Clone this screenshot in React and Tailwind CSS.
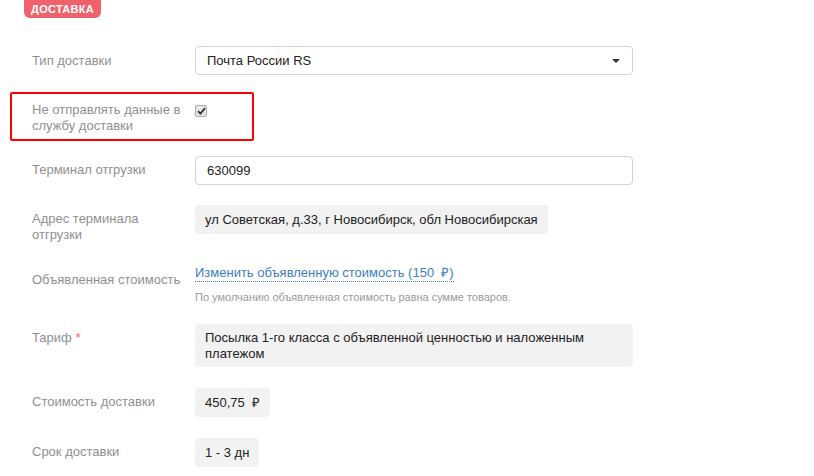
import React from "react";

const Label = ({ children, className = "" }) => (
    <div className={`w-[163px] shrink-0 pr-[12px] text-[13px] leading-4 text-[#8f8f8f] ${className}`}>{children}</div>
);

const GreyBox = ({ children, className = "" }) => (
    <div className={`rounded-[4px] bg-[#f2f2f2] px-[10px] text-[13px] leading-4 text-[#222] ${className}`}>{children}</div>
);

const App = () => {
    return (
        <div className="relative w-[814px] h-[476px] overflow-hidden bg-white font-['Liberation_Sans',Arial,sans-serif]">
            <div className="flex h-[18px] pl-[24px]">
                <div className="flex h-[18px] items-center rounded-b-[6px] bg-[#f0616b] px-[7px] text-[11px] font-bold leading-none tracking-[0.3px] text-white">
                    ДОСТАВКА
                </div>
            </div>

            <div className="pl-[32px]">
                <div className="mt-[28px] flex items-center">
                    <Label>Тип доставки</Label>
                    <div className="flex h-[29px] w-[438px] items-center justify-between rounded-[4px] border border-[#d4d4d4] pl-[11px] pr-[12px] text-[13px] text-[#222]">
                        <span>Почта России RS</span>
                        <svg width="8" height="4" viewBox="0 0 8 4">
                            <path d="M0 0 L8 0 L4 4 Z" fill="#333" />
                        </svg>
                    </div>
                </div>

                <div className="mt-[27px] flex h-[32px]">
                    <Label>Не отправлять данные в службу доставки</Label>
                    <div className="mt-[3px] flex h-[12px] w-[12px] items-center justify-center rounded-[2px] border border-[#a9a9a9] bg-[#e6e6e6]">
                        <svg width="9" height="8" viewBox="0 0 9 8">
                            <path d="M1 4.2 L3.4 6.6 L8 1.2" stroke="#333" strokeWidth="1.8" fill="none" />
                        </svg>
                    </div>
                </div>

                <div className="mt-[22px] flex">
                    <Label className="pt-[6px]">Терминал отгрузки</Label>
                    <div className="flex h-[29px] w-[438px] items-center rounded-[4px] border border-[#d4d4d4] px-[11px] text-[13px] text-[#222]">
                        630099
                    </div>
                </div>

                <div className="mt-[20px] flex">
                    <Label className="pt-[6px]">Адрес терминала отгрузки</Label>
                    <div>
                        <GreyBox className="flex h-[29px] items-center">ул Советская, д.33, г Новосибирск, обл Новосибирская</GreyBox>
                    </div>
                </div>

                <div className="mt-[22px] flex">
                    <Label className="pt-[7px]">Объявленная стоимость</Label>
                    <div>
                        <div className="w-fit border-b border-dotted border-[#3d7dbf] text-[13px] leading-4 text-[#3d7dbf]">
                            Изменить объявленную стоимость (150&nbsp; ₽)
                        </div>
                        <div className="mt-[8px] text-[11px] leading-[14px] text-[#9a9a9a]">
                            По умолчанию объявленная стоимость равна сумме товаров.
                        </div>
                    </div>
                </div>

                <div className="mt-[20px] flex">
                    <Label className="pt-[6px]">
                        Тариф <span className="text-[#f0616b]">*</span>
                    </Label>
                    <GreyBox className="w-[438px] pt-[6px] pb-[5px]">
                        Посылка 1-го класса с объявленной ценностью и наложенным платежом
                    </GreyBox>
                </div>

                <div className="mt-[21px] flex">
                    <Label className="pt-[6px]">Стоимость доставки</Label>
                    <GreyBox className="flex h-[29px] items-center">450,75&nbsp; ₽</GreyBox>
                </div>

                <div className="mt-[21px] flex">
                    <Label className="pt-[6px]">Срок доставки</Label>
                    <GreyBox className="flex h-[29px] items-center">1 - 3 дн</GreyBox>
                </div>
            </div>

            <div className="absolute left-[10px] top-[92px] h-[49px] w-[244px] rounded-[2px] border-2 border-[#ff0000]" />
        </div>
    );
};

export default App;
